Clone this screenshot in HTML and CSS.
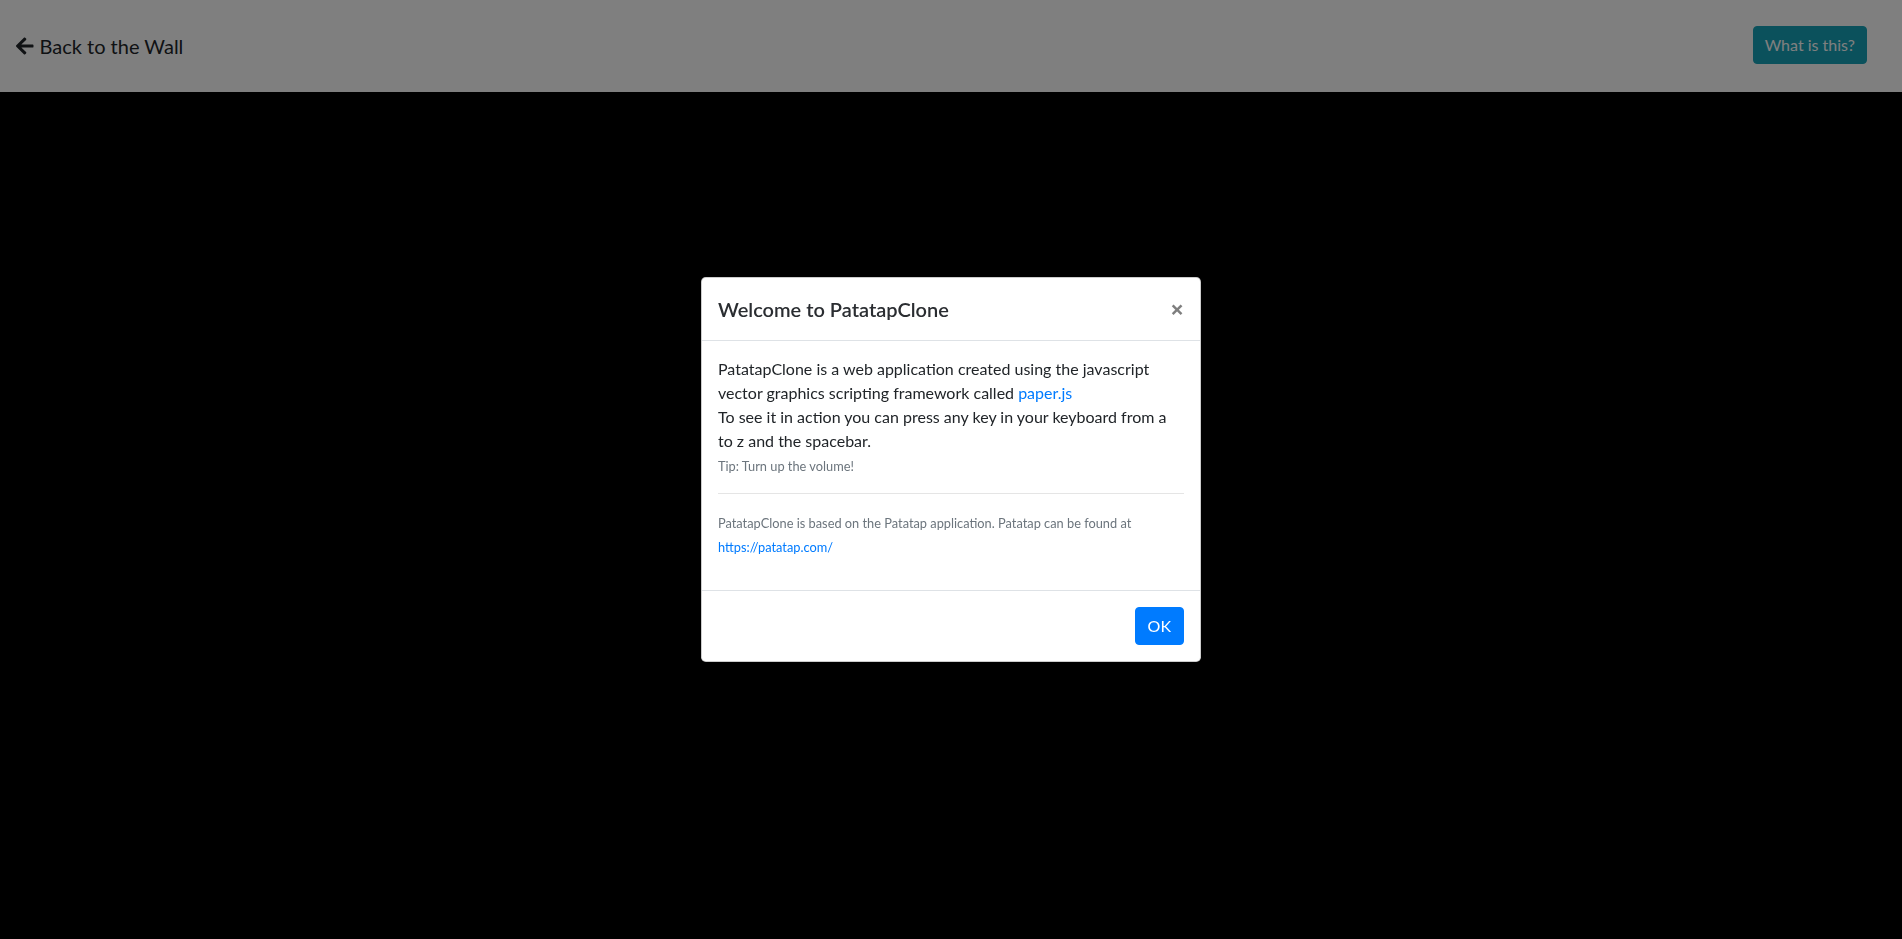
FILE: index.html
```html
<!DOCTYPE html>
<html lang="en">
<head>
<meta charset="utf-8">
<title>PatatapClone</title>
<link rel="stylesheet" href="styles.css">
</head>
<body>
<nav class="navbar">
  <a class="brand" href="#">
    <svg class="arrow" viewBox="0 0 448 512" width="17.5" height="20"><path fill="currentColor" d="M257.5 445.1l-22.2 22.2c-9.4 9.4-24.6 9.4-33.9 0L7 273c-9.4-9.4-9.4-24.6 0-33.9L201.4 44.7c9.4-9.4 24.6-9.4 33.9 0l22.2 22.2c9.5 9.5 9.300 25-.4 34.3L136.6 216H424c13.3 0 24 10.7 24 24v32c0 13.3-10.7 24-24 24H136.6l120.5 114.8c9.8 9.3 10 24.8.4 34.3z"/></svg>
    <span>Back to the Wall</span>
  </a>
  <button class="btn-info" type="button">What is this?</button>
</nav>
<main class="canvas"></main>

<div class="backdrop"></div>
<div class="modal">
  <div class="modal-content">
    <div class="modal-header">
      <h5 class="modal-title">Welcome to PatatapClone</h5>
      <button class="close" type="button">&times;</button>
    </div>
    <div class="modal-body">
      <p>PatatapClone is a web application created using the javascript vector graphics scripting framework called <a href="#">paper.js</a><br>
      To see it in action you can press any key in your keyboard from a to z and the spacebar.<br>
      <small class="muted">Tip: Turn up the volume!</small></p>
      <hr>
      <p><small class="muted">PatatapClone is based on the Patatap application. Patatap can be found at <a href="#">https://patatap.com/</a></small></p>
    </div>
    <div class="modal-footer">
      <button class="btn-primary" type="button">OK</button>
    </div>
  </div>
</div>
</body>
</html>
```

FILE: styles.css
```css
* { box-sizing: border-box; }
html, body { margin: 0; height: 100%; }
body {
  font-family: Lato, "Noto Sans", sans-serif;
  font-size: 16px;
  line-height: 1.5;
  color: #212529;
  background: #000;
  overflow: hidden;
}
.navbar {
  height: 92px;
  background: #fff;
  display: flex;
  align-items: center;
  justify-content: space-between;
  padding: 0 35px 0 16px;
}
.brand {
  display: flex;
  align-items: center;
  gap: 6px;
  color: #212529;
  text-decoration: none;
  font-size: 20px;
  margin-top: -1px;
}
.arrow { display: block; }
.btn-info {
  font-family: Lato, "Noto Sans", sans-serif;
  font-size: 16px;
  line-height: 24px;
  color: #fff;
  background: #17a2b8;
  border: 1px solid #17a2b8;
  border-radius: 4px;
  padding: 6px 11px;
  margin-top: -3px;
}
.canvas { height: calc(100% - 92px); background: #000; }
.backdrop {
  position: fixed;
  inset: 0;
  background: rgba(0, 0, 0, 0.5);
}
.modal {
  position: fixed;
  inset: 0;
  display: flex;
  align-items: center;
  justify-content: center;
}
.modal-content {
  width: 500px;
  background: #fff;
  border: 1px solid rgba(0, 0, 0, 0.2);
  border-radius: 4.8px;
}
.modal-header {
  display: flex;
  justify-content: space-between;
  align-items: flex-start;
  padding: 16px;
  border-bottom: 1px solid #dee2e6;
}
.modal-title {
  margin: 0;
  font-size: 20px;
  font-weight: 600;
  line-height: 30px;
  color: #2a2d31;
}
.close {
  font-family: "Noto Sans", sans-serif;
  background: none;
  border: 0;
  padding: 19px 16px 13px;
  margin: -16px -16px -16px auto;
  font-size: 24px;
  font-weight: 700;
  line-height: 1;
  color: #000;
  opacity: 0.5;
}
.modal-body { padding: 16px; }
.modal-body p { margin: 0 0 16px; }
.muted { color: #6c757d; font-size: 80%; }
a { color: #007bff; text-decoration: none; }
hr {
  margin: 16px 0;
  border: 0;
  border-top: 1px solid rgba(0, 0, 0, 0.1);
}
.modal-footer {
  display: flex;
  justify-content: flex-end;
  padding: 12px;
  border-top: 1px solid #dee2e6;
}
.btn-primary {
  margin: 4px;
  font-family: Lato, "Noto Sans", sans-serif;
  font-size: 16px;
  line-height: 24px;
  color: #fff;
  background: #007bff;
  border: 1px solid #007bff;
  border-radius: 4px;
  padding: 6px 12px;
}
```
